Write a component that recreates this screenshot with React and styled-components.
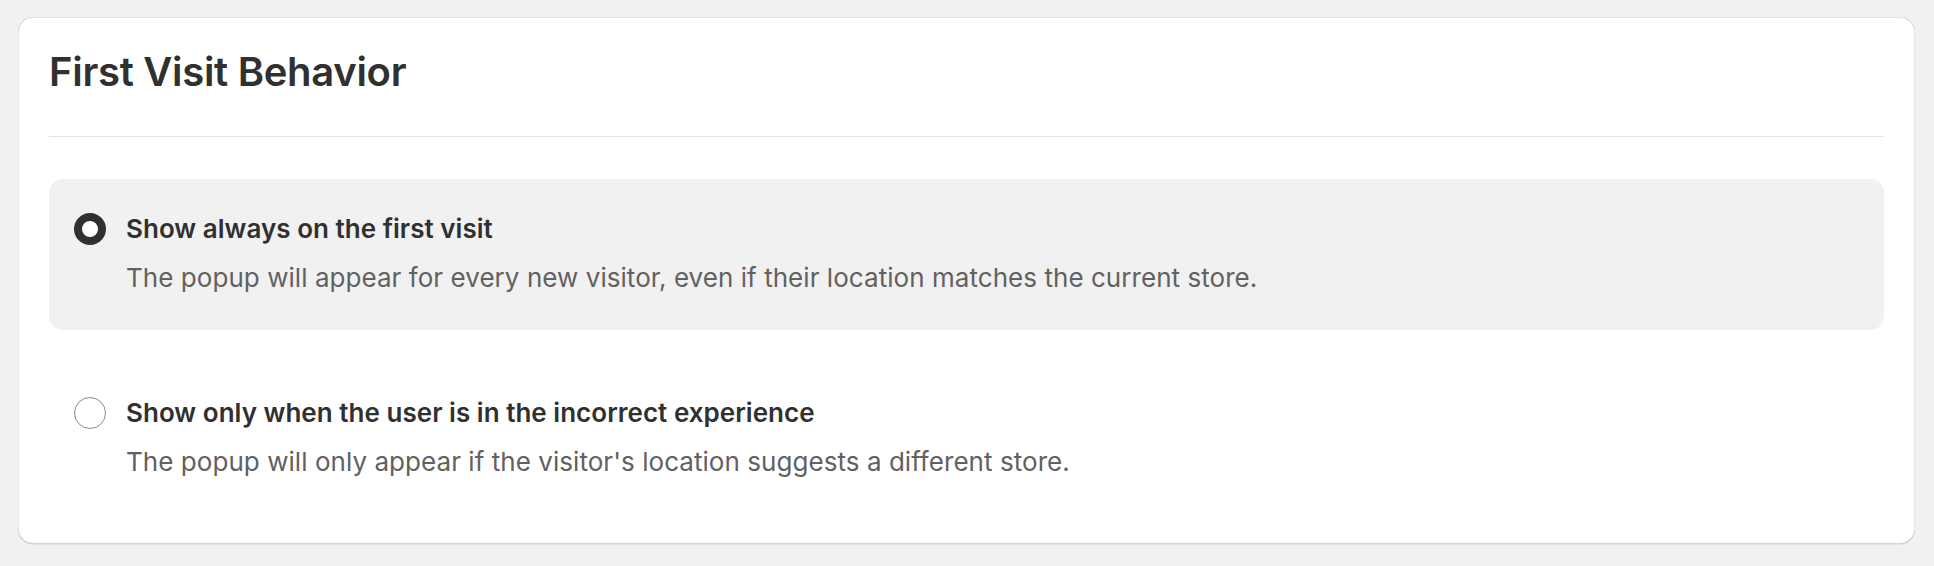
import React, { useState } from "react";
import styled, { createGlobalStyle } from "styled-components";

const GlobalStyle = createGlobalStyle`
  html, body {
    margin: 0;
    padding: 0;
    background: #f1f1f1;
  }
  body {
    font-family: Inter, "Noto Sans", "Liberation Sans", sans-serif;
    color: #303030;
    -webkit-font-smoothing: antialiased;
  }
`;

const Page = styled.div`
  padding: 17px 19px 22px 18px;
`;

const Card = styled.section`
  background: #ffffff;
  border-radius: 15px;
  padding: 30px 31px 30px 31px;
  box-shadow:
    0 1px 0 0 rgba(26, 26, 26, 0.07),
    inset 1px 0 0 0 rgba(0, 0, 0, 0.1),
    inset -1px 0 0 0 rgba(0, 0, 0, 0.1),
    inset 0 -1px 0 0 rgba(0, 0, 0, 0.17),
    inset 0 1px 0 0 rgba(204, 204, 204, 0.5);
`;

const Title = styled.h2`
  margin: 0;
  font-size: 40px;
  line-height: 50px;
  font-weight: 600;
  letter-spacing: -0.3px;
  color: #303030;
`;

const Divider = styled.hr`
  margin: 39px 0 42px;
  border: 0;
  height: 1px;
  background: #e3e3e3;
`;

const Options = styled.div`
  display: flex;
  flex-direction: column;
  gap: 33px;
`;

const Option = styled.label`
  display: grid;
  grid-template-columns: 32px 1fr;
  column-gap: 20px;
  padding: 30px 25px 32px;
  border-radius: 14px;
  background: ${(p) => (p.$selected ? "#f1f1f1" : "transparent")};
  cursor: pointer;
`;

const RadioWrap = styled.span`
  height: 40px;
  display: flex;
  align-items: center;
`;

const Radio = styled.span`
  box-sizing: border-box;
  width: 32px;
  height: 32px;
  border-radius: 50%;
  background: #ffffff;
  border: ${(p) => (p.$checked ? "8px solid #303030" : "1.5px solid #8a8a8a")};
`;

const Texts = styled.span`
  display: flex;
  flex-direction: column;
  gap: 9px;
`;

const Label = styled.span`
  font-size: 26px;
  line-height: 40px;
  font-weight: 600;
  letter-spacing: 0.03px;
  color: #303030;
`;

const Description = styled.span`
  font-size: 26px;
  line-height: 40px;
  font-weight: 400;
  letter-spacing: 0.05px;
  color: #616161;
`;

const options = [
  {
    id: "always",
    label: "Show always on the first visit",
    description:
      "The popup will appear for every new visitor, even if their location matches the current store.",
  },
  {
    id: "incorrect",
    label: "Show only when the user is in the incorrect experience",
    description:
      "The popup will only appear if the visitor's location suggests a different store.",
  },
];

export default function App() {
  const [value, setValue] = useState("always");
  return (
    <>
      <GlobalStyle />
      <Page>
        <Card>
          <Title>First Visit Behavior</Title>
          <Divider />
          <Options>
            {options.map((o) => (
              <Option
                key={o.id}
                $selected={value === o.id}
                onClick={() => setValue(o.id)}
              >
                <RadioWrap>
                  <Radio $checked={value === o.id} />
                </RadioWrap>
                <Texts>
                  <Label>{o.label}</Label>
                  <Description>{o.description}</Description>
                </Texts>
              </Option>
            ))}
          </Options>
        </Card>
      </Page>
    </>
  );
}
